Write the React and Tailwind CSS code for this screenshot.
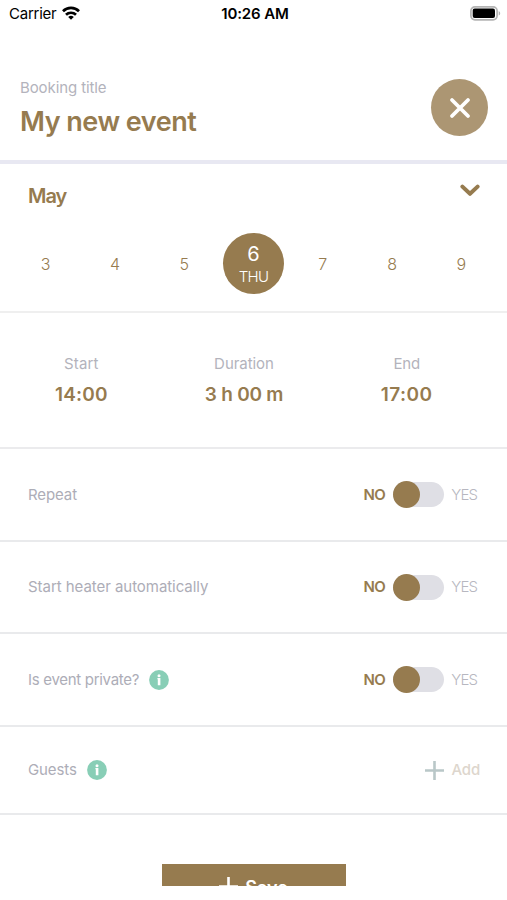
import React, { useState } from 'react';

const days = [3, 4, 5, 6, 7, 8, 9];

const times = [
    { label: 'Start', value: '14:00', labelCls: 'tracking-[0.2px]', valueCls: 'tracking-[0.2px]' },
    { label: 'Duration', value: '3 h 00 m', labelCls: 'tracking-[-0.05px]', valueCls: 'tracking-[-0.25px]' },
    { label: 'End', value: '17:00', labelCls: 'tracking-[-0.2px]', valueCls: 'tracking-[0.5px]' },
];

const StatusBar = () => (
    <div className="h-7 shrink-0 grid grid-cols-3 items-center pl-[9px] pr-[6px] text-black">
        <div className="flex items-center gap-[6px]">
            <span className="text-[15px] leading-5 tracking-[-0.25px]">Carrier</span>
            <svg width="18" height="14" viewBox="0 0 18 14" fill="none" stroke="currentColor" strokeWidth="2.7" className="-mt-0.5">
                <path d="M1 5.2a11.4 11.4 0 0 1 16 0" />
                <path d="M4 8.8a7.1 7.1 0 0 1 10 0" />
                <path d="M9 13.8L6.2 11.1a4 4 0 0 1 5.6 0z" fill="currentColor" stroke="none" />
            </svg>
        </div>
        <span className="text-center text-[15px] leading-5 font-semibold whitespace-nowrap tracking-[-0.1px]">10:26 AM</span>
        <svg width="31" height="15" viewBox="0 0 31 15" className="justify-self-end -mt-0.5">
            <rect x="0.9" y="0.9" width="26.2" height="12.9" rx="4" fill="none" stroke="#b4b4b4" strokeWidth="1.7" />
            <rect x="2.7" y="2.6" width="22.3" height="9.4" rx="2" fill="#000" />
            <path d="M28.7 5v4.6a2.5 2.5 0 0 0 0-4.6z" fill="#b4b4b4" />
        </svg>
    </div>
);

const InfoIcon = () => (
    <svg width="20" height="20" viewBox="0 0 20 20" className="shrink-0">
        <circle cx="10" cy="10" r="9.9" fill="#88ceb6" />
        <circle cx="10" cy="5.8" r="1.5" fill="#fff" />
        <path d="M8.4 8.1h3v7.1H8.8V9.3h-.4z" fill="#fff" />
    </svg>
);

const Toggle = () => {
    const [on, setOn] = useState(false);

    return (
        <div className="flex items-center text-[15px] leading-5">
            <span className={on ? 'text-[#b7b7c0] font-light' : 'text-[#967b4f] font-semibold tracking-[-0.6px]'}>NO</span>
            <button
                onClick={() => setOn(!on)}
                className={`ml-[8px] mr-[7px] w-[51px] h-[27px] flex items-center ${on ? 'justify-end' : 'justify-start'}`}
            >
                <span className={`w-[51px] h-[25px] rounded-full bg-[#dfdfe5] flex items-center ${on ? 'justify-end' : 'justify-start'}`}>
                    <span className="w-[27px] h-[27px] shrink-0 rounded-full bg-[#967b4f]" />
                </span>
            </button>
            <span className={on ? 'text-[#967b4f] font-semibold' : 'text-[#b7b7c0] font-light tracking-[-0.9px]'}>YES</span>
        </div>
    );
};

const Row = ({ label, labelCls, info, height, children }) => (
    <div className={`flex items-center justify-between pl-[28px] border-b-2 border-[#e9eaec] shrink-0 ${height}`}>
        <div className="flex items-center gap-[10px]">
            <span className={`text-[15px] leading-5 text-[#adadb7] whitespace-nowrap ${labelCls}`}>{label}</span>
            {info && <InfoIcon />}
        </div>
        {children}
    </div>
);

const App = () => {
    const [selected, setSelected] = useState(6);

    return (
        <div className="w-[507px] h-[900px] bg-white overflow-hidden flex flex-col font-['Inter',sans-serif] text-[#967b4f]">
            <StatusBar />

            <div className="h-[136px] shrink-0 border-b-4 border-[#e8e8f2] flex justify-between pl-[20px] pr-[19px]">
                <div className="pt-[50px]">
                    <p className="text-[15px] leading-5 text-[#b3b3bc] tracking-[-0.1px]">Booking title</p>
                    <h1 className="mt-[8px] text-[27px] leading-8 font-semibold tracking-[-0.5px]">My new event</h1>
                </div>
                <button className="mt-[51px] w-[57px] h-[57px] rounded-full bg-[#ac9673] flex items-center justify-center">
                    <svg width="22" height="22" viewBox="0 0 22 22" stroke="#fff" strokeWidth="3.8" strokeLinecap="round">
                        <path d="M3 3l16 16M19 3L3 19" />
                    </svg>
                </button>
            </div>

            <div className="h-[149px] shrink-0 border-b-2 border-[#efefef]">
                <div className="flex justify-between pl-[28px] pr-[27px] pt-[18px]">
                    <h2 className="text-[20px] leading-7 font-semibold tracking-[-1px]">May</h2>
                    <svg width="20" height="13" viewBox="0 0 20 13" fill="none" stroke="currentColor" strokeWidth="4" strokeLinecap="round" strokeLinejoin="round" className="mt-[2px]">
                        <path d="M2.4 2.6L10 9.8l7.6-7.2" />
                    </svg>
                </div>
                <div className="mt-[23px] px-[11px] grid grid-cols-7 h-[61px] items-center">
                    {days.map((day) => (
                        <button key={day} onClick={() => setSelected(day)} className="flex justify-center">
                            {day === selected ? (
                                <span className="w-[61px] h-[61px] pt-[2px] rounded-full bg-[#967b4f] text-white flex flex-col items-center justify-center">
                                    <span className="text-[20px] leading-6">{day}</span>
                                    <span className="mt-px text-[15px] leading-5 font-light tracking-[-0.7px]">THU</span>
                                </span>
                            ) : (
                                <span className="text-[16px] leading-5 font-light">{day}</span>
                            )}
                        </button>
                    ))}
                </div>
            </div>

            <div className="h-[136px] shrink-0 border-b-2 border-[#ebebed] grid grid-cols-3 pr-[19px] pt-[41px] text-center">
                {times.map((time) => (
                    <div key={time.label}>
                        <p className={`text-[15px] leading-5 text-[#b3b3bc] ${time.labelCls}`}>{time.label}</p>
                        <p className={`mt-[9px] text-[19px] leading-6 font-semibold whitespace-nowrap ${time.valueCls}`}>{time.value}</p>
                    </div>
                ))}
            </div>

            <Row label="Repeat" labelCls="tracking-[-0.1px]" height="h-[93px] pr-[30px]">
                <Toggle />
            </Row>
            <Row label="Start heater automatically" labelCls="tracking-[-0.05px]" height="h-[92px] pr-[30px]">
                <Toggle />
            </Row>
            <Row label="Is event private?" labelCls="tracking-[-0.3px]" info height="h-[93px] pr-[30px]">
                <Toggle />
            </Row>
            <Row label="Guests" labelCls="tracking-[-0.1px]" info height="h-[88px] pr-[27px]">
                <button className="flex items-center gap-[8px]">
                    <svg width="19" height="19" viewBox="0 0 19 19" stroke="#b9c7c8" strokeWidth="2.6">
                        <path d="M9.5 0v19M0 9.5h19" />
                    </svg>
                    <span className="text-[15px] leading-5 font-medium text-[#ddd6cd] tracking-[-0.2px]">Add</span>
                </button>
            </Row>

            <div className="h-[71px] shrink-0 overflow-hidden flex justify-center pt-[49px]">
                <button className="w-[184px] h-[47px] shrink-0 bg-[#967b4f] text-white flex items-center justify-center gap-[7px]">
                    <svg width="19" height="19" viewBox="0 0 19 19" stroke="currentColor" strokeWidth="2.6" className="-mt-[2px]">
                        <path d="M9.5 0v19M0 9.5h19" />
                    </svg>
                    <span className="text-[18px] leading-6 font-semibold">Save</span>
                </button>
            </div>
        </div>
    );
};

export default App;
